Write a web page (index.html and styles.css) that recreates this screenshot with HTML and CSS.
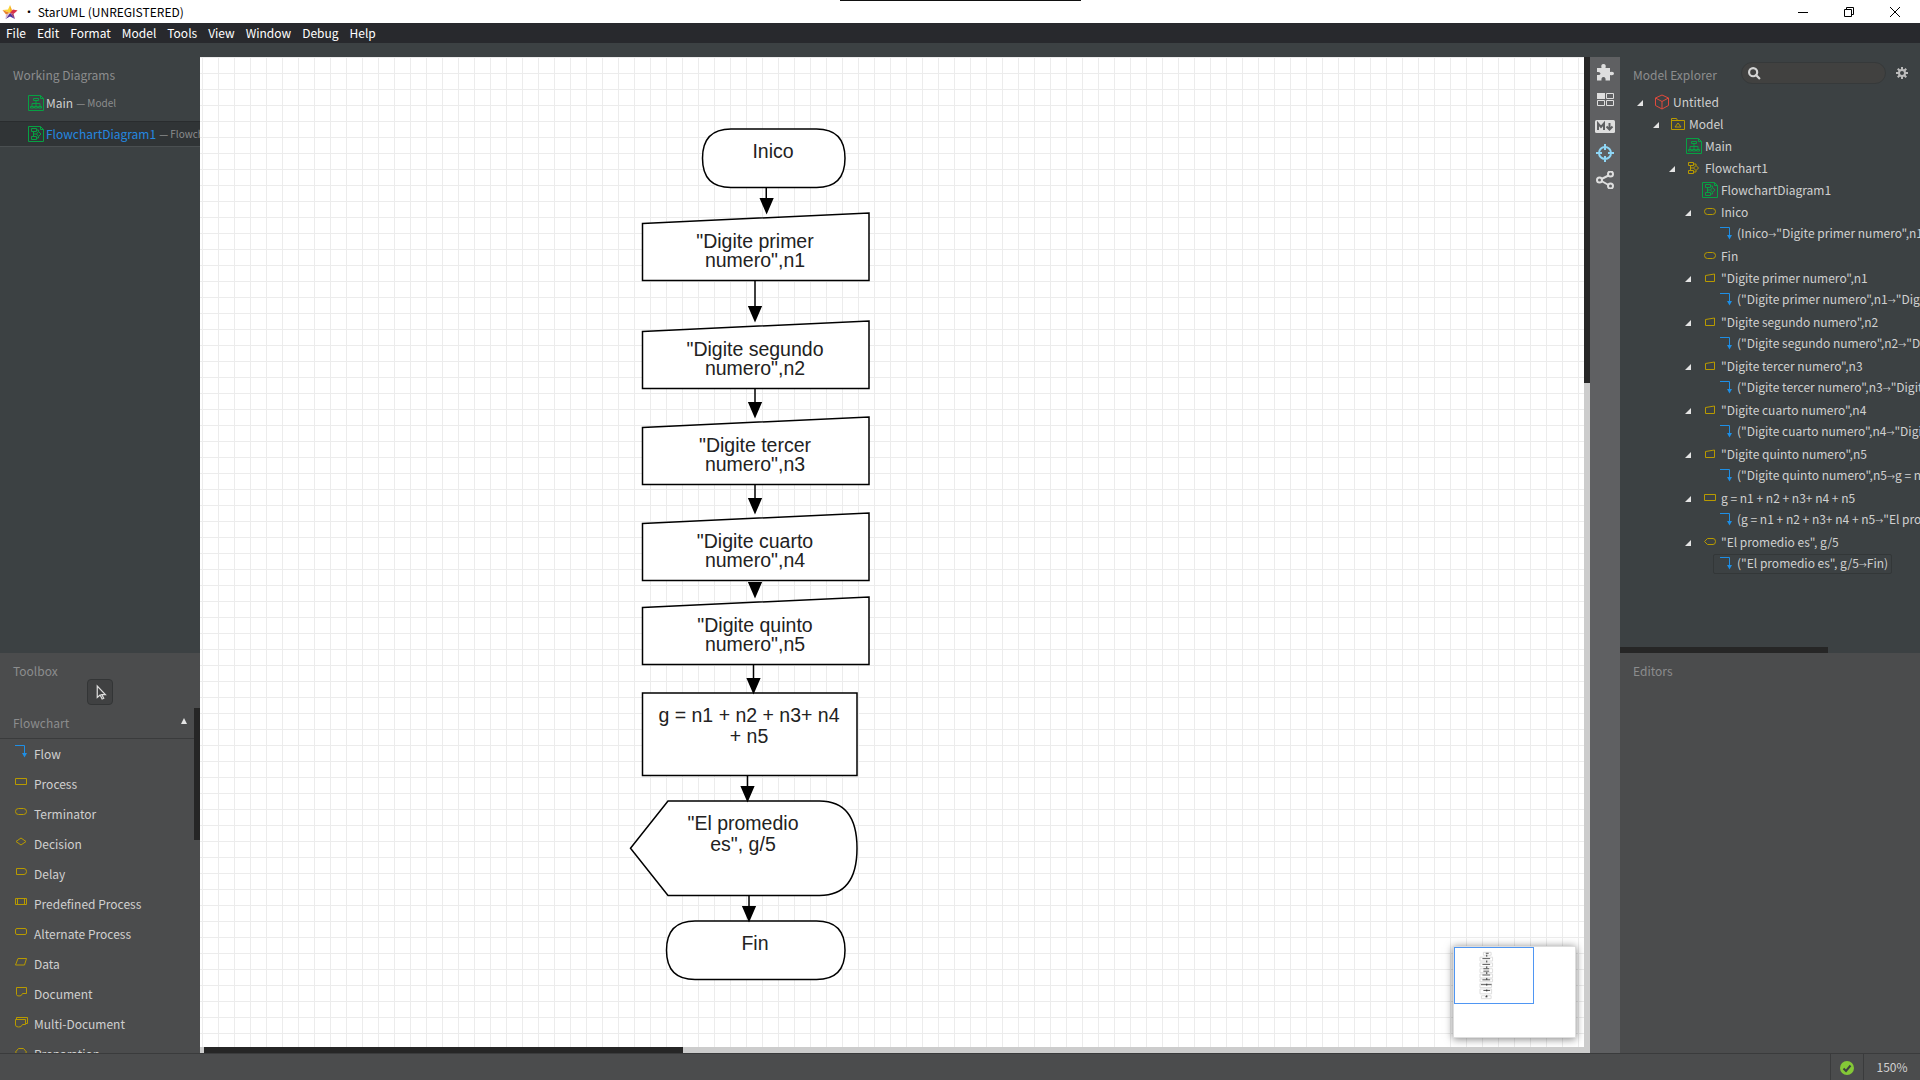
FILE: index.html
```html
<!DOCTYPE html>
<html lang="es">
<head>
<meta charset="utf-8">
<title>StarUML (UNREGISTERED)</title>
<link rel="stylesheet" href="styles.css">
</head>
<body>
<svg class="defs" aria-hidden="true">
  <symbol id="i-diagram" viewBox="0 0 16 16"><path d="M.5.5h12l3 3v12H.5zM12.5.5v3h3" /><path d="M5.5 3.5h5v2h-5zM2.5 11.500h3v1.500h-3zM6.500 11.500h3v1.500h-3zM10.500 11.500h3v1.500h-3zM8 5.500v6M4 11.500v-3h8v3" /></symbol>
  <symbol id="i-flowdiagram" viewBox="0 0 16 16"><path d="M.5.5h12l3 3v12H.5zM12.5.5v3h3" /><path d="M3.500 2.500h5v3h-5zM3.500 10.500h5v3h-5zM5.500 5.500v2.500h3M5.500 8v2.500M8.500 8l2-2.500 2.500 2.500-2.500 2.500zM8.500 12h2v-1.500M8.500 4h2v1.500" /></symbol>
  <symbol id="i-project" viewBox="0 0 16 16"><path d="M8 1l6.500 3v7.500L8 15l-6.500-3.500V4zM1.500 4L8 7.500 14.500 4M8 7.500V15" /></symbol>
  <symbol id="i-model" viewBox="0 0 16 16"><path d="M1.500 13.500v-11h5l1 2h7v9zM1.500 4.500h7M5 11l3-4 3 4z" /></symbol>
  <symbol id="i-flowchart" viewBox="0 0 16 16"><path d="M2.500 2.500h5v3h-5zM2.500 10.500h5v3h-5zM4.500 5.500v5M4.500 8h3M7.500 8L10 5.500 12.500 8 10 10.500zM7.500 4H10v1.500M7.500 12H10v-1.500" /></symbol>
  <symbol id="i-flow" viewBox="0 0 16 16"><path d="M2 1.500h9.500V12" /><path class="solid" d="M9 9h5l-2.500 4.500z" /></symbol>
  <symbol id="i-process" viewBox="0 0 16 16"><path d="M2.500 4.500h11v6h-11z" /></symbol>
  <symbol id="i-terminator" viewBox="0 0 16 16"><rect x="2.500" y="4.500" width="11" height="6" rx="3" /></symbol>
  <symbol id="i-decision" viewBox="0 0 16 16"><path d="M3 7.500l5-3.500 5 3.500L8 11z" /></symbol>
  <symbol id="i-delay" viewBox="0 0 16 16"><path d="M3.500 4.500H11q2.500 0 2.500 3t-2.500 3H3.500z" /></symbol>
  <symbol id="i-predefined" viewBox="0 0 16 16"><path d="M2.500 4.500h11v6h-11zM4.500 4.500v6M11.500 4.500v6" /></symbol>
  <symbol id="i-alternate" viewBox="0 0 16 16"><rect x="2.500" y="4.500" width="11" height="6" rx="1.500" /></symbol>
  <symbol id="i-data" viewBox="0 0 16 16"><path d="M5 4.500h8.500l-2 6.500H2.500z" /></symbol>
  <symbol id="i-document" viewBox="0 0 16 16"><path d="M3.500 3.500h10v6H9.500q-1 3-3.500 2.500-2.500 0-2.500-1.500z" /></symbol>
  <symbol id="i-multidoc" viewBox="0 0 16 16"><path d="M2.500 5.500h10v5H9.500q-1 3-4 2.500-3 0-3-2zM3.500 5.500v-2h11v6h-2" /></symbol>
  <symbol id="i-preparation" viewBox="0 0 16 16"><path d="M2.500 8l3-3.500h5l3 3.500-3 3.500h-5z" /></symbol>
  <symbol id="i-input" viewBox="0 0 16 16"><path d="M3.500 5.500l9-1.500v7.500h-9z" /></symbol>
  <symbol id="i-display" viewBox="0 0 16 16"><path d="M2.500 7.500l3-3H11q2.500 0 2.500 3t-2.500 3H5.500z" /></symbol>
</svg>

<div class="app">
  <header class="titlebar">
    <svg class="logo" viewBox="0 0 16 16"><path fill="#f5b325" d="M8 1l2 5 5.500.5L8 9z"/><path fill="#fcd436" d="M8 1v8L.5 6 6 5.500z"/><path fill="#d8314c" d="M15.500 6.500L11.500 10 8 9l3-3.500z"/><path fill="#e8812a" d="M.5 6L8 9l-4 1.500z"/><path fill="#a33a6b" d="M11.500 10l1.500 5-5-6z"/><path fill="#4b2e9b" d="M8 9l5 6-5-2.500L3.500 15z"/><path fill="#d9b6c8" d="M4 10.500L8 9l-4.500 6z"/></svg>
    <h1 class="title">• StarUML (UNREGISTERED)</h1>
    <div class="window-buttons">
      <button type="button" aria-label="Minimize"><svg viewBox="0 0 10 10"><path d="M0 5.500h10"/></svg></button>
      <button type="button" aria-label="Restore"><svg viewBox="0 0 10 10"><path d="M.5 2.500h7v7h-7zM2.500 2.500v-2h7v7h-2"/></svg></button>
      <button type="button" aria-label="Close"><svg viewBox="0 0 10 10"><path d="M0 0l10 10M10 0L0 10"/></svg></button>
    </div>
    <div class="top-tab"></div>
  </header>

  <nav class="menubar">
    <button type="button">File</button><button type="button">Edit</button><button type="button">Format</button><button type="button">Model</button><button type="button">Tools</button><button type="button">View</button><button type="button">Window</button><button type="button">Debug</button><button type="button">Help</button>
  </nav>

  <div class="toolbar-strip"></div>

  <div class="workspace">
    <aside class="sidebar">
      <section class="working">
        <h2 class="panel-title">Working Diagrams</h2>
        <ul class="working-list">
          <li><svg class="icon green"><use href="#i-diagram"/></svg><span>Main</span><small>— Model</small></li>
          <li class="selected"><svg class="icon green"><use href="#i-flowdiagram"/></svg><span>FlowchartDiagram1</span><small>— Flowchart1</small></li>
        </ul>
      </section>
      <section class="toolbox">
        <h2 class="panel-title">Toolbox</h2>
        <button type="button" class="select-tool" aria-label="Select"><svg viewBox="0 0 16 20"><path d="M4 2v14l3.500-3 2.500 5 2-1-2.500-4.500H14z"/></svg></button>
        <div class="group">
          <h3 class="group-title">Flowchart<span class="caret-up"></span></h3>
          <ul class="tools">
            <li><svg class="icon blue"><use href="#i-flow"/></svg>Flow</li>
            <li><svg class="icon gold"><use href="#i-process"/></svg>Process</li>
            <li><svg class="icon gold"><use href="#i-terminator"/></svg>Terminator</li>
            <li><svg class="icon gold"><use href="#i-decision"/></svg>Decision</li>
            <li><svg class="icon gold"><use href="#i-delay"/></svg>Delay</li>
            <li><svg class="icon gold"><use href="#i-predefined"/></svg>Predefined Process</li>
            <li><svg class="icon gold"><use href="#i-alternate"/></svg>Alternate Process</li>
            <li><svg class="icon gold"><use href="#i-data"/></svg>Data</li>
            <li><svg class="icon gold"><use href="#i-document"/></svg>Document</li>
            <li><svg class="icon gold"><use href="#i-multidoc"/></svg>Multi-Document</li>
            <li><svg class="icon gold"><use href="#i-preparation"/></svg>Preparation</li>
          </ul>
          <div class="group-thumb"></div>
        </div>
      </section>
    </aside>

    <main class="editor">
      <div class="canvas">
        <svg class="diagram" width="1380" height="990" viewBox="-1 0 920 660">
          <g class="shape">
            <path d="M353 48h57q19 0 19 19.500t-19 19.500h-57q-19 0-19-19.500t19-19.500z"/>
            <path d="M294 111l151-7v45H294z"/>
            <path d="M294 183l151-7v45H294z"/>
            <path d="M294 247l151-7v45H294z"/>
            <path d="M294 311l151-7v45H294z"/>
            <path d="M294 367l151-7v45H294z"/>
            <path d="M294 424h143v55H294z"/>
            <path d="M286 527.500L311 496h101q25 0 25 31.500T412 559H311z"/>
            <path d="M329 576h81q19 0 19 19.500t-19 19.500h-81q-19 0-19-19.500t19-19.500z"/>
          </g>
          <path class="link" d="M376.500 87v8M369 149v18M369 221v10M369 285v10M368 405v10M364 479v8M365 559v8"/>
          <path class="head" d="M372 94h9.500l-4.750 11zM364.250 166h9.500L369 177zM364.250 230h9.500L369 241zM364.250 294h9.500L369 305zM364.250 350h9.500L369 361zM363.250 414h9.500L368 425zM359.250 486h9.500L364 497zM360.250 566h9.500L365 577z"/>
          <g class="label">
            <text x="381" y="67">Inico</text>
            <text x="369" y="127">"Digite primer</text><text x="369" y="140">numero",n1</text>
            <text x="369" y="199">"Digite segundo</text><text x="369" y="212">numero",n2</text>
            <text x="369" y="263">"Digite tercer</text><text x="369" y="276">numero",n3</text>
            <text x="369" y="327">"Digite cuarto</text><text x="369" y="340">numero",n4</text>
            <text x="369" y="383">"Digite quinto</text><text x="369" y="396">numero",n5</text>
            <text x="365" y="443">g = n1 + n2 + n3+ n4</text><text x="365" y="457">+ n5</text>
            <text x="361" y="515">"El promedio</text><text x="361" y="529">es", g/5</text>
            <text x="369" y="595">Fin</text>
          </g>
        </svg>
        <div class="minimap">
          <svg class="minimap-view" viewBox="0 0 80 57">
            <g fill="#fff" stroke="#ddd"><path d="M29 4.500h8v3h-8zM25.500 9.500h13v4h-13zM25.500 15.500h13v4h-13zM25.500 21.500h13v4h-13zM25.500 27h13v4h-13zM25.500 32h13v3h-13zM25.500 37h12v4h-12zM25.500 42.500h12v5h-12zM27 49.500h10v3h-10z"/></g>
            <path stroke="#555" d="M31.500 5.500h3M28 11h8M28 17h8M29 21.500h6M29 24h6M28 28h8M28 33h8M26.500 38h11M29 44h7M31 50.500h2"/>
            <path stroke="#333" stroke-dasharray="2 4" d="M32.500 7v45"/>
          </svg>
        </div>
      </div>
      <div class="vscroll"><div class="vthumb"></div></div>
      <div class="hscroll"><div class="hthumb"></div></div>
    </main>

    <nav class="dock">
      <button type="button" aria-label="Extensions"><svg viewBox="0 0 18 18"><path class="fill" d="M1 5h4.500Q4.500 1 7.500 1t2 4H14v4q4-1 4 1.500T14 12v5.500H9.500q.5-3.500-2-3.500t-2 3.500H1V12q3.500.5 3.500-1.500T1 9z"/></svg></button>
      <button type="button" aria-label="Toolbox layout"><svg viewBox="0 0 18 18"><path class="fill" d="M1 3h8v6H1z"/><path class="line" d="M10.500 3.500h7v5h-7zM1.500 10.500h7v5h-7zM10.500 10.500h7v5h-7z"/></svg></button>
      <button type="button" aria-label="Documentation"><svg viewBox="0 0 20 18"><rect class="fill" x="0" y="3" width="20" height="13" rx="1.500"/><path class="cut" d="M3 13V6.500l3 3.500 3-3.500V13M14.500 6v6M11.500 9.500l3 3 3-3"/></svg></button>
      <button type="button" aria-label="Navigate" class="active"><svg viewBox="0 0 18 18"><path class="thick" d="M15 9A6 6 0 1 1 3 9a6 6 0 0 1 12 0M9 0v6M9 12v6M0 9h6M12 9h6"/></svg></button>
      <button type="button" aria-label="Relationships"><svg viewBox="0 0 18 18"><path class="thick" d="M5.500 8L12.500 4.500M5.500 10l7 4"/><g class="thick"><circle cx="3.500" cy="9" r="2.500"/><circle cx="14.500" cy="3" r="2.500"/><circle cx="14.500" cy="15" r="2.500"/></g></svg></button>
    </nav>

    <aside class="explorer">
      <section class="model">
        <header class="model-head">
          <h2 class="panel-title">Model Explorer</h2>
          <label class="search"><svg viewBox="0 0 12 12"><path d="M8.500 4.750a3.750 3.750 0 1 1-7.500 0 3.750 3.750 0 0 1 7.500 0M7.500 7.500L11 11"/></svg><input type="text" aria-label="Search"></label>
          <button type="button" class="gear" aria-label="Settings"><svg viewBox="0 0 12 12"><circle cx="6" cy="6" r="3" /><path d="M6 0v3M6 9v3M0 6h3M9 6h3M1.750 1.750l2 2M8.250 8.250l2 2M10.250 1.750l-2 2M3.750 8.250l-2 2"/></svg></button>
        </header>
        <ul class="tree">
          <li><div class="node open"><svg class="icon red"><use href="#i-project"/></svg><span>Untitled</span></div>
            <ul>
              <li><div class="node open"><svg class="icon gold"><use href="#i-model"/></svg><span>Model</span></div>
                <ul>
                  <li><div class="node"><svg class="icon green"><use href="#i-diagram"/></svg><span>Main</span></div></li>
                  <li><div class="node open"><svg class="icon gold"><use href="#i-flowchart"/></svg><span>Flowchart1</span></div>
                    <ul>
                      <li><div class="node"><svg class="icon green"><use href="#i-flowdiagram"/></svg><span>FlowchartDiagram1</span></div></li>
                      <li><div class="node open"><svg class="icon gold"><use href="#i-terminator"/></svg><span>Inico</span></div>
                        <ul><li><div class="node"><svg class="icon blue"><use href="#i-flow"/></svg><span>(Inico<i>→</i>"Digite primer numero",n1)</span></div></li></ul></li>
                      <li><div class="node"><svg class="icon gold"><use href="#i-terminator"/></svg><span>Fin</span></div></li>
                      <li><div class="node open"><svg class="icon gold"><use href="#i-input"/></svg><span>"Digite primer numero",n1</span></div>
                        <ul><li><div class="node"><svg class="icon blue"><use href="#i-flow"/></svg><span>("Digite primer numero",n1<i>→</i>"Digite segundo numero",n2)</span></div></li></ul></li>
                      <li><div class="node open"><svg class="icon gold"><use href="#i-input"/></svg><span>"Digite segundo numero",n2</span></div>
                        <ul><li><div class="node"><svg class="icon blue"><use href="#i-flow"/></svg><span>("Digite segundo numero",n2<i>→</i>"Digite tercer numero",n3)</span></div></li></ul></li>
                      <li><div class="node open"><svg class="icon gold"><use href="#i-input"/></svg><span>"Digite tercer numero",n3</span></div>
                        <ul><li><div class="node"><svg class="icon blue"><use href="#i-flow"/></svg><span>("Digite tercer numero",n3<i>→</i>"Digite cuarto numero",n4)</span></div></li></ul></li>
                      <li><div class="node open"><svg class="icon gold"><use href="#i-input"/></svg><span>"Digite cuarto numero",n4</span></div>
                        <ul><li><div class="node"><svg class="icon blue"><use href="#i-flow"/></svg><span>("Digite cuarto numero",n4<i>→</i>"Digite quinto numero",n5)</span></div></li></ul></li>
                      <li><div class="node open"><svg class="icon gold"><use href="#i-input"/></svg><span>"Digite quinto numero",n5</span></div>
                        <ul><li><div class="node"><svg class="icon blue"><use href="#i-flow"/></svg><span>("Digite quinto numero",n5<i>→</i>g = n1 + n2 + n3+ n4 + n5)</span></div></li></ul></li>
                      <li><div class="node open"><svg class="icon gold"><use href="#i-process"/></svg><span>g = n1 + n2 + n3+ n4 + n5</span></div>
                        <ul><li><div class="node"><svg class="icon blue"><use href="#i-flow"/></svg><span>(g = n1 + n2 + n3+ n4 + n5<i>→</i>"El promedio es", g/5)</span></div></li></ul></li>
                      <li><div class="node open"><svg class="icon gold"><use href="#i-display"/></svg><span>"El promedio es", g/5</span></div>
                        <ul><li><div class="node focused"><svg class="icon blue"><use href="#i-flow"/></svg><span>("El promedio es", g/5<i>→</i>Fin)</span></div></li></ul></li>
                    </ul></li>
                </ul></li>
            </ul></li>
        </ul>
        <div class="model-thumb"></div>
      </section>
      <section class="editors"><h2 class="panel-title">Editors</h2></section>
    </aside>
  </div>

  <footer class="status">
    <span class="valid"><svg viewBox="0 0 16 16"><circle cx="8" cy="8" r="7" fill="#84c837"/><path d="M4.500 8.500L7 11l4.500-5.500"/></svg></span>
    <span class="zoom">150%</span>
  </footer>
</div>
</body>
</html>
```
FILE: styles.css
```css
* { box-sizing: border-box; }
body { margin: 0; font-family: "Noto Sans CJK SC", "Noto Sans", sans-serif; font-size: 12px; line-height: 22px; color: #d0d0d0; }
h1, h2, h3, ul { margin: 0; padding: 0; font-weight: 400; font-size: 12px; list-style: none; }
button { border: 0; padding: 0; margin: 0; background: none; font: inherit; color: inherit; }
.defs { display: none; }

.app { display: flex; flex-direction: column; height: 100vh; overflow: hidden; background: #3c4143; }

.titlebar { position: relative; display: flex; align-items: center; height: 23px; background: #fff; color: #000; flex: none; }
.logo { width: 16px; height: 16px; margin: 0 5px 0 2px; }
.title { font-family: "Noto Sans CJK SC", sans-serif; line-height: 22px; }
.window-buttons { margin-left: auto; margin-right: 2px; display: flex; }
.window-buttons button { width: 46px; height: 20px; display: flex; align-items: center; justify-content: center; }
.window-buttons svg { width: 10px; height: 10px; fill: none; stroke: #000; stroke-width: 1; }
.top-tab { position: absolute; top: 0; left: 50%; width: 241px; height: 1px; margin-left: -120px; background: #111; }

.menubar { display: flex; gap: 1px; height: 20px; padding-left: 1px; flex: none; background: #28292d; color: #fff; }
.menubar button { padding: 0 5px; line-height: 20px; }
.toolbar-strip { height: 14px; flex: none; background: #3c4143; }

.workspace { display: grid; grid-template-columns: 200px minmax(0, 1fr) 30px 300px; flex: 1; min-height: 0; }
.panel-title { color: #8c8d8e; line-height: 22px; padding-left: 13px; white-space: nowrap; }

.sidebar, .explorer { display: grid; grid-template-rows: minmax(0, 596fr) minmax(0, 400fr); min-width: 0; min-height: 0; overflow: hidden; }
.working { padding-top: 7px; overflow: hidden; }
.working-list { padding-top: 2px; }
.working-list li { display: flex; align-items: center; height: 26px; padding-left: 28px; white-space: nowrap; }
.working-list li:first-child { height: 30px; margin-bottom: 3px; }
.working-list li.selected { background: #303436; border-top: 1px solid #292c2e; border-bottom: 1px solid #4a4f51; }
.working-list span { margin-left: 2px; }
.working-list small { font-size: 10px; color: #8c8d8e; margin-left: 3px; }
.selected span { color: #2488e0; }

.icon { width: 16px; height: 16px; flex: none; fill: none; stroke-width: 1; overflow: hidden; }
.green { stroke: #07a043; }
.gold { stroke: #b89a00; }
.blue { stroke: #1e8fe6; }
.red { stroke: #e04a3c; }
.solid { fill: #1e8fe6; stroke: none; }

.toolbox { display: flex; flex-direction: column; padding-top: 7px; background: #4b4c4d; overflow: hidden; }
.select-tool { width: 26px; height: 26px; margin: -3px auto 0; border: 1px solid #333536; border-radius: 4px; background: #404142; display: flex; align-items: center; justify-content: center; flex: none; }
.select-tool svg { width: 13px; height: 17px; fill: none; stroke: #ddd; stroke-width: 1.5; }
.group { position: relative; flex: 1; min-height: 0; overflow: hidden; margin-top: 3px; }
.group-title { height: 31px; padding: 4px 7px 0 13px; margin-right: 6px; border-bottom: 1px solid #3a3b3c; color: #8c8d8e; display: flex; justify-content: space-between; }
.caret-up { width: 0; height: 0; margin-top: 6px; border: 3px solid transparent; border-top: 0; border-bottom: 6px solid #e4e4e4; }
.tools li { display: flex; height: 30px; align-items: center; padding-left: 13px; white-space: nowrap; }
.tools .icon { margin-right: 5px; margin-bottom: 5px; }
.group-thumb { position: absolute; right: 0; top: 0; width: 6px; height: 132px; background: #262626; }

.editor { display: grid; grid-template: minmax(0, 1fr) 6px / minmax(0, 1fr) 6px; min-height: 0; }
.canvas { position: relative; overflow: hidden; background-color: #fff; background-image: linear-gradient(#ececec 1px, transparent 1px), linear-gradient(90deg, #ececec 1px, transparent 1px); background-size: 16px 16px; background-position: 0 0, 2px 0; }
.diagram { display: block; }
.shape { fill: #fff; stroke: #000; stroke-width: 1; }
.link { fill: none; stroke: #000; stroke-width: 1; }
.head { fill: #000; }
.label { font-family: "Liberation Sans", Arial, sans-serif; font-size: 13px; fill: #222; text-anchor: middle; }
.minimap { position: absolute; right: 8px; bottom: 9px; width: 123px; height: 92px; background: #fff; border: 1px solid #ddd; box-shadow: 0 1px 8px rgba(0, 0, 0, .5); }
.minimap-view { display: block; width: 80px; height: 57px; border: 1px solid #4f96f3; fill: none; }
.vscroll, .hscroll { background: #ccc; }
.vthumb { height: 326px; background: #262626; }
.hscroll { grid-column: 1 / 3; padding-left: 4px; }
.hthumb { width: 479px; height: 6px; background: #262626; }

.dock { display: flex; flex-direction: column; align-items: center; background: #5f6062; padding-top: 1px; }
.dock button { width: 30px; height: 27px; display: flex; align-items: center; justify-content: center; }
.dock svg { height: 18px; }
.dock .fill { fill: #dedede; }
.dock .line { fill: none; stroke: #dedede; }
.dock .cut { fill: none; stroke: #5f6062; stroke-width: 2; }
.dock .thick { fill: none; stroke: #dedede; stroke-width: 2; }
.dock .active .thick { stroke: #8fd6f6; }

.model { position: relative; overflow: hidden; }
.model-head { display: flex; align-items: center; height: 32px; padding-right: 12px; }
.model-head .panel-title { padding-top: 4px; }
.search { display: flex; align-items: center; width: 145px; height: 22px; margin-left: auto; margin-right: 10px; border: 1px solid #36393a; border-radius: 11px; background: #414140; padding-left: 6px; }
.search svg { width: 13px; height: 13px; fill: none; stroke: #d4d4d4; stroke-width: 2; flex: none; }
.search input { flex: 1; min-width: 0; border: 0; outline: 0; background: none; color: inherit; font: inherit; height: 18px; }
.gear { width: 12px; height: 12px; }
.gear svg { display: block; width: 12px; height: 12px; fill: none; stroke: #bcbcbc; stroke-width: 2; }
.tree { padding-left: 17px; padding-top: 2px; }
.tree ul { padding-left: 16px; }
.tree i { font-style: normal; font-size: 8px; }
.node { position: relative; display: flex; align-items: center; height: 22px; padding-left: 17px; white-space: nowrap; }
.node span { margin-left: 3px; line-height: 20px; }
.node.open::before { content: ""; position: absolute; left: 0; top: 9px; border-left: 6px solid transparent; border-bottom: 6px solid #e4e4e4; }
.node.focused { width: max-content; height: 20px; margin: 1px 0 0 12px; padding: 0 3px 0 4px; border: 1px solid #333738; border-radius: 2px; }
.model-thumb { position: absolute; left: 0; bottom: 0; width: 208px; height: 6px; background: #262626; }
.editors { background: #4b4c4d; padding-top: 7px; }

.status { display: flex; justify-content: flex-end; height: 27px; flex: none; background: #4b4c4d; border-top: 1px solid #3a3b3c; }
.valid, .zoom { display: flex; align-items: center; justify-content: center; border-left: 1px solid #3a3b3c; }
.valid { width: 33px; }
.valid svg { width: 16px; height: 16px; margin-top: 2px; }
.valid path { fill: none; stroke: #3d3f40; stroke-width: 2; }
.zoom { width: 57px; }
```
